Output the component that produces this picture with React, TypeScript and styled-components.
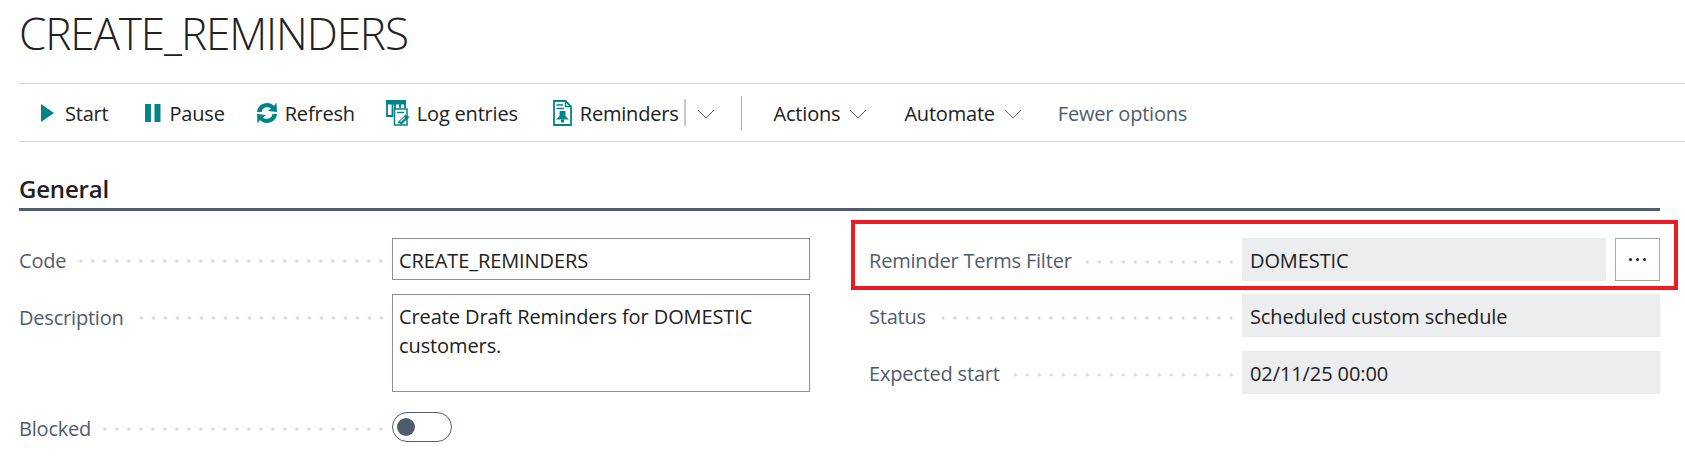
import React from "react"
import styled, { createGlobalStyle } from "styled-components"

const GlobalStyle = createGlobalStyle`
  html, body {
    margin: 0;
    padding: 0;
    background: #fff;
  }
  body {
    font-family: "Open Sans", "Noto Sans", sans-serif;
    color: #212121;
  }
`

const Page = styled.div`
  width: 1685px;
  height: 471px;
  overflow: hidden;
  padding-left: 19px;
  box-sizing: border-box;
`

const Title = styled.h1`
  margin: 0;
  height: 83px;
  padding-top: 7px;
  box-sizing: border-box;
  font-size: 44px;
  line-height: 52px;
  font-weight: 300;
  letter-spacing: -1.1px;
  color: #212121;
`

const Toolbar = styled.div`
  display: flex;
  align-items: center;
  height: 59px;
  box-sizing: border-box;
  padding-left: 22px;
  border-top: 1px solid #d4d4d4;
  border-bottom: 1px solid #d4d4d4;
`

const ToolButton = styled.div<{ $left: number; $muted?: boolean }>`
  display: flex;
  align-items: center;
  margin-left: ${(p) => p.$left}px;
  font-size: 20px;
  letter-spacing: -0.2px;
  white-space: nowrap;
  color: ${(p) => (p.$muted ? "#505c6d" : "#212121")};
  svg {
    flex: none;
  }
`

const ToolText = styled.span<{ $left: number }>`
  margin-left: ${(p) => p.$left}px;
  padding-top: 2px;
`

const SplitLine = styled.span`
  width: 2px;
  height: 27px;
  margin: 0 11px 0 5px;
  background: #c8c8c8;
`

const Divider = styled.span`
  width: 1px;
  height: 34px;
  margin-left: 26px;
  background: #a9aeb6;
`

const SectionTitle = styled.h2`
  margin: 31px 0 0;
  width: 1641px;
  height: 38px;
  box-sizing: border-box;
  font-size: 24px;
  line-height: 32px;
  font-weight: 600;
  letter-spacing: -0.2px;
  color: #212121;
  border-bottom: 3px solid #505c6d;
`

const Columns = styled.div`
  display: grid;
  grid-template-columns: 791px 791px;
  column-gap: 59px;
  width: 1641px;
  padding-top: 27px;
`

const Column = styled.div`
  display: flex;
  flex-direction: column;
`

const Row = styled.div<{ $top?: number }>`
  position: relative;
  display: flex;
  align-items: flex-start;
  margin-top: ${(p) => p.$top ?? 0}px;
`

const LabelCell = styled.div<{ $height: number }>`
  display: flex;
  align-items: center;
  width: 373px;
  height: ${(p) => p.$height}px;
  flex: none;
`

const Label = styled.span`
  padding-top: 2px;
  font-size: 20px;
  letter-spacing: -0.2px;
  color: #505c6d;
  white-space: nowrap;
`

const Leader = styled.span`
  flex: 1;
  height: 6px;
  margin: 4px 5px 0 12px;
  background-image: radial-gradient(circle at center, #d6d6d6 1.2px, transparent 1.9px);
  background-size: 12px 6px;
  background-position: right center;
`

const InputBox = styled.div<{ $height: number }>`
  width: 418px;
  height: ${(p) => p.$height}px;
  box-sizing: border-box;
  padding: 0 6px;
  border: 1px solid #8a8f98;
  font-size: 20px;
  letter-spacing: -0.1px;
  line-height: 29px;
  color: #212121;
  display: flex;
  align-items: ${(p) => (p.$height > 50 ? "flex-start" : "center")};
  padding-top: ${(p) => (p.$height > 50 ? 7 : 2)}px;
`

const ReadOnlyBox = styled.div<{ $width?: number; $height: number }>`
  width: ${(p) => p.$width ?? 418}px;
  height: ${(p) => p.$height}px;
  box-sizing: border-box;
  padding: 2px 8px 0;
  background: #ecedef;
  font-size: 20px;
  letter-spacing: -0.1px;
  color: #212121;
  display: flex;
  align-items: center;
`

const LookupButton = styled.div`
  width: 45px;
  height: 43px;
  margin-left: 9px;
  box-sizing: border-box;
  border: 1px solid #a6a6a6;
  display: flex;
  align-items: center;
  justify-content: center;
  gap: 4px;
`

const LookupDot = styled.span`
  width: 3px;
  height: 3px;
  border-radius: 50%;
  background: #212121;
`

const Toggle = styled.div`
  width: 60px;
  height: 30px;
  box-sizing: border-box;
  border: 1px solid #505c6d;
  border-radius: 15px;
  display: flex;
  align-items: center;
  padding-left: 4px;
`

const ToggleKnob = styled.span`
  width: 18px;
  height: 18px;
  border-radius: 50%;
  background: #505c6d;
`

const Highlight = styled.div`
  position: absolute;
  left: -18px;
  top: -18px;
  width: 827px;
  height: 70px;
  box-sizing: border-box;
  border: 4px solid #ed1c24;
  pointer-events: none;
`

const TEAL = "#008489"

const StartIcon = () => (
  <svg width="13" height="20" viewBox="0 0 13 20">
    <path d="M0 1 L13 10 L0 19 Z" fill={TEAL} />
  </svg>
)

const PauseIcon = () => (
  <svg width="16" height="20" viewBox="0 0 16 20">
    <rect x="0" y="1" width="6" height="18" fill={TEAL} />
    <rect x="9.5" y="1" width="6" height="18" fill={TEAL} />
  </svg>
)

const RefreshIcon = () => (
  <svg width="22" height="24" viewBox="0 0 22 24">
    <path
      d="M1 11 C1.5 5.5 6 2 11 2 C14 2 16.4 3.2 18 5 L20.5 1.5 L21 11 L12 10 L15 7.6 C13.8 6.6 12.5 6.2 11 6.2 C8 6.2 6 8.2 5.6 11 Z"
      fill={TEAL}
    />
    <path
      d="M21 13 C20.5 18.5 16 22 11 22 C8 22 5.6 20.8 4 19 L1.5 22.5 L1 13 L10 14 L7 16.4 C8.2 17.4 9.5 17.8 11 17.8 C14 17.8 16 15.8 16.4 13 Z"
      fill={TEAL}
    />
  </svg>
)

const LogIcon = () => (
  <svg width="24" height="26" viewBox="0 0 24 26">
    <rect x="0" y="0" width="20" height="4.5" fill={TEAL} />
    <path d="M1 4 V16 H6.5 V4 M9 4 V9 M14 4 V8 M19 4 V8" fill="none" stroke={TEAL} strokeWidth="1.8" />
    <rect x="8.5" y="9" width="12.5" height="16" fill="#fff" stroke={TEAL} strokeWidth="1.5" />
    <path d="M11 12.5 H18" stroke={TEAL} strokeWidth="1.5" />
    <path d="M11.5 22.5 L19.5 14.5 L23.5 17 L15.5 24.5 Z" fill={TEAL} />
    <path d="M14.5 21.5 L18.5 17.5" stroke="#fff" strokeWidth="1.2" />
  </svg>
)

const ReminderIcon = () => (
  <svg width="19" height="26" viewBox="0 0 19 26">
    <path d="M1 1 H12.5 L18 6.5 V25 H1 Z" fill="#fff" stroke={TEAL} strokeWidth="1.8" />
    <path d="M12.5 1 V6.5 H18" fill="none" stroke={TEAL} strokeWidth="1.4" />
    <path d="M3.5 5 H10 M3.5 8.5 H11" stroke={TEAL} strokeWidth="1.7" />
    <path d="M6.5 11 H12.5 V16 L16 19.5 H3 L6.5 16 Z" fill={TEAL} />
    <rect x="8" y="19.5" width="3" height="3" fill={TEAL} />
  </svg>
)

const Chevron = ({ left = 9 }: { left?: number }) => (
  <svg width="18" height="10" viewBox="0 0 18 10" style={{ marginLeft: left, marginTop: 2 }}>
    <path d="M1 1 L9 9 L17 1" fill="none" stroke="#5f6773" strokeWidth="1" />
  </svg>
)

const FieldLabel = ({ text, height }: { text: string; height: number }) => (
  <LabelCell $height={height}>
    <Label>{text}</Label>
    <Leader />
  </LabelCell>
)

export default function App() {
  return (
    <>
      <GlobalStyle />
      <Page>
        <Title>CREATE_REMINDERS</Title>
        <Toolbar>
          <ToolButton $left={0}>
            <StartIcon />
            <ToolText $left={11}>Start</ToolText>
          </ToolButton>
          <ToolButton $left={36}>
            <PauseIcon />
            <ToolText $left={9}>Pause</ToolText>
          </ToolButton>
          <ToolButton $left={31}>
            <RefreshIcon />
            <ToolText $left={7}>Refresh</ToolText>
          </ToolButton>
          <ToolButton $left={31}>
            <LogIcon />
            <ToolText $left={7}>Log entries</ToolText>
          </ToolButton>
          <ToolButton $left={35}>
            <ReminderIcon />
            <ToolText $left={8}>Reminders</ToolText>
            <SplitLine />
            <Chevron left={0} />
          </ToolButton>
          <Divider />
          <ToolButton $left={32}>
            <ToolText $left={0}>Actions</ToolText>
            <Chevron />
          </ToolButton>
          <ToolButton $left={37}>
            <ToolText $left={0}>Automate</ToolText>
            <Chevron />
          </ToolButton>
          <ToolButton $left={36} $muted>
            <ToolText $left={0}>Fewer options</ToolText>
          </ToolButton>
        </Toolbar>
        <SectionTitle>General</SectionTitle>
        <Columns>
          <Column>
            <Row>
              <FieldLabel text="Code" height={42} />
              <InputBox $height={42}>CREATE_REMINDERS</InputBox>
            </Row>
            <Row $top={14}>
              <FieldLabel text="Description" height={44} />
              <InputBox $height={98}>
                Create Draft Reminders for DOMESTIC
                <br />
                customers.
              </InputBox>
            </Row>
            <Row $top={20}>
              <FieldLabel text="Blocked" height={30} />
              <Toggle>
                <ToggleKnob />
              </Toggle>
            </Row>
          </Column>
          <Column>
            <Row>
              <Highlight />
              <FieldLabel text="Reminder Terms Filter" height={43} />
              <ReadOnlyBox $width={364} $height={43}>
                DOMESTIC
              </ReadOnlyBox>
              <LookupButton>
                <LookupDot />
                <LookupDot />
                <LookupDot />
              </LookupButton>
            </Row>
            <Row $top={13}>
              <FieldLabel text="Status" height={43} />
              <ReadOnlyBox $height={43}>Scheduled custom schedule</ReadOnlyBox>
            </Row>
            <Row $top={14}>
              <FieldLabel text="Expected start" height={43} />
              <ReadOnlyBox $height={43}>02/11/25 00:00</ReadOnlyBox>
            </Row>
          </Column>
        </Columns>
      </Page>
    </>
  )
}
